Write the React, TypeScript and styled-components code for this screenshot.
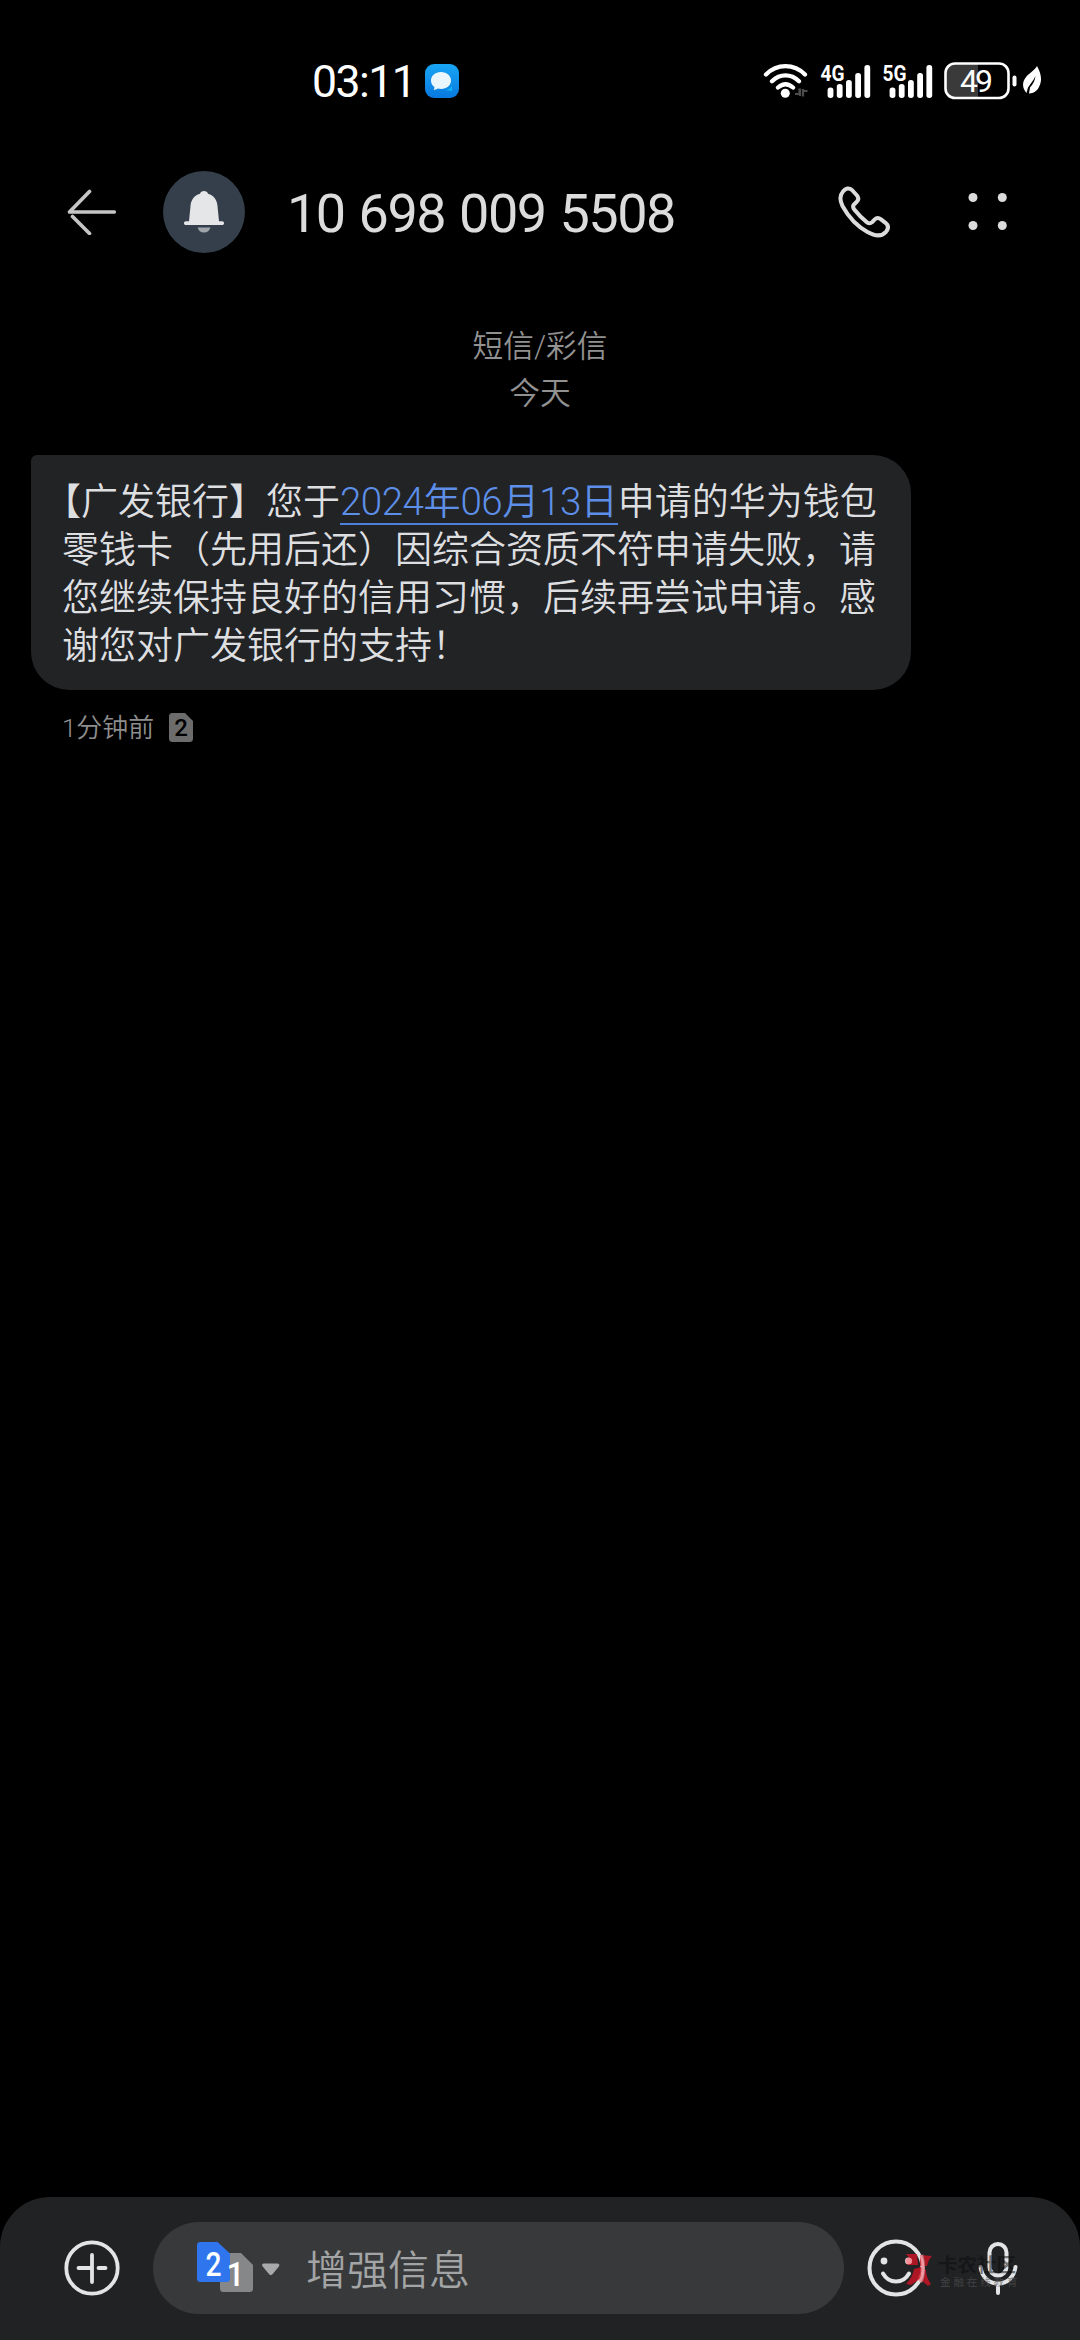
import React from "react";
import styled, { createGlobalStyle } from "styled-components";

const CJK = `"Noto Sans CJK SC", sans-serif`;

const GlobalStyle = createGlobalStyle`
  *, *::before, *::after { box-sizing: border-box; }
  body { margin: 0; background: #000; font-family: Roboto, ${CJK}; }
  svg { display: block; flex: none; }
`;

const Screen = styled.div`
  display: flex;
  flex-direction: column;
  width: 1080px;
  height: 2340px;
  overflow: hidden;
  background: #000;
  color: #dedfe0;
`;

const StatusBar = styled.header`
  display: flex;
  align-items: center;
  justify-content: space-between;
  height: 126px;
  padding: 36px 38px 0 312px;
`;

const StatusGroup = styled.div<{ $gap?: number }>`
  display: flex;
  align-items: center;
  gap: ${(p) => p.$gap ?? 0}px;
`;

const Clock = styled.time`
  padding-top: 2px;
  font-size: 44.5px;
  line-height: 54px;
  letter-spacing: -1.5px;
  color: #fff;
`;

const AppBar = styled.nav`
  display: flex;
  align-items: center;
  height: 172px;
  padding: 0 72px 0 66px;
`;

const Avatar = styled.div`
  display: grid;
  place-items: center;
  width: 82px;
  height: 82px;
  margin-left: 47px;
  border-radius: 50%;
  background: #353f4b;
`;

const Title = styled.h1`
  flex: 1;
  margin: 0 0 0 42px;
  padding-top: 3px;
  font-size: 54px;
  font-weight: 400;
  line-height: 64px;
  letter-spacing: -1.5px;
  word-spacing: 2px;
  color: #dcdcdc;
`;

const BarActions = styled.div`
  display: flex;
  align-items: center;
  gap: 78px;
`;

const Thread = styled.main`
  flex: 1;
  display: flex;
  flex-direction: column;
  padding: 25px 31px 0;
`;

const DayLabel = styled.div`
  font: 350 30.7px/47px Roboto, ${CJK};
  color: #919191;
  text-align: center;
`;

const Bubble = styled.article`
  width: 880px;
  height: 235px;
  margin-top: 38px;
  padding: 24px 0 0 31px;
  border-radius: 6px 38px 38px 38px;
  background: #222325;
`;

const Line = styled.p`
  margin: 0;
  font: 350 37px/48px Roboto, ${CJK};
  text-spacing-trim: space-all;
  white-space: nowrap;
`;

const OpeningMark = styled.span`
  margin-left: -18px;
`;

const DateLink = styled.a`
  display: inline-block;
  height: 46px;
  border-bottom: 2px solid #4d80d8;
  line-height: 48px;
  color: #5d8fe8;
  vertical-align: top;
`;

const Digits = styled.span`
  font-size: 38.5px;
  line-height: 1;
  letter-spacing: -0.5px;
`;

const Meta = styled.footer`
  display: flex;
  align-items: center;
  gap: 15px;
  height: 40px;
  margin: 18px 0 0 31px;
  font: 350 25.9px/40px Roboto, ${CJK};
  color: #8e8e8e;
`;

const Composer = styled.section`
  display: flex;
  align-items: flex-start;
  height: 143px;
  padding: 25px 0 0 64px;
  border-radius: 50px 50px 0 0;
  background: #212224;
`;

const IconSlot = styled.div<{ $left: number }>`
  display: grid;
  place-items: center;
  height: 92px;
  margin-left: ${(p) => p.$left}px;
`;

const Field = styled.div`
  display: flex;
  align-items: center;
  width: 691px;
  height: 92px;
  margin-left: 33px;
  padding-left: 44px;
  border-radius: 46px;
  background: #38393b;
`;

const Placeholder = styled.span`
  margin: -3px 0 0 25px;
  font: 350 41px/60px ${CJK};
  color: #a3a4a5;
`;

const VoiceSlot = styled(IconSlot)`
  position: relative;
`;

const Watermark = styled.div`
  position: absolute;
  left: -73px;
  top: 31px;
  display: flex;
  gap: 6px;
  opacity: 0.8;
`;

const WatermarkText = styled.div`
  display: flex;
  flex-direction: column;
  white-space: nowrap;
`;

const WatermarkName = styled.span`
  font: 700 19.5px/22px ${CJK};
  color: rgba(12, 12, 12, 0.65);
`;

const WatermarkSlogan = styled.span`
  padding-left: 2px;
  font: 500 10.5px/13px ${CJK};
  letter-spacing: 2.9px;
  color: rgba(85, 85, 87, 0.7);
`;

const MessageBadge = () => (
  <svg width="34" height="34" viewBox="0 0 34 34">
    <defs>
      <linearGradient id="badge" x1="0" y1="0" x2="0" y2="1">
        <stop offset="0" stopColor="#18a5f4" />
        <stop offset="1" stopColor="#0879df" />
      </linearGradient>
    </defs>
    <rect width="34" height="34" rx="9" fill="url(#badge)" />
    <path d="M20 26c5 0 7-3 7-7v8z" fill="#10b5f5" />
    <path d="M16 8c6 0 10 3.800 10 8.500S22 25 16 25c-1.200 0-2.300-.1-3.300-.4C11.500 25.600 10 26 8.500 26c.8-.8 1-1.900.9-2.900C7.200 21.500 6 19.200 6 16.500 6 11.800 10 8 16 8z" fill="#e9f7fd" />
  </svg>
);

const Wifi = () => (
  <svg width="46" height="36" viewBox="0 0 46 36" fill="none" stroke="#fff" strokeWidth="4.300" strokeLinecap="round">
    <path d="M3 11.500C14 .4 31 .4 42 11.500M9 18.300c8-7.800 19-7.800 27 0M15 24.500c4.800-4.200 10.200-4.200 15 0" />
    <circle cx="22.300" cy="30.300" r="4.500" fill="#fff" stroke="none" />
    <path d="M32 31h4.500v-5.500M37 25.500V33M44.500 28H40v5.500M40 33.500V26" stroke="#4c4c4c" strokeWidth="2.200" strokeLinecap="butt" />
  </svg>
);

const Signal = ({ label }: { label: string }) => (
  <svg width="51" height="46" viewBox="0 -5 51 46">
    <text x="0.500" y="17.500" textLength="24" lengthAdjust="spacingAndGlyphs" fontFamily="Roboto" fontSize="22.500" fontWeight="700" fill="#fff">
      {label}
    </text>
    {[24.5, 21, 17, 10, 2].map((y, i) => (
      <rect key={y} x={7.6 + i * 9.2} y={y} width="5.800" height={35 - y} rx="2.700" fill="#fff" />
    ))}
  </svg>
);

const Battery = () => (
  <svg width="98" height="38" viewBox="0 0 98 38">
    <path d="M34 2H12C5 2 2 5 2 12v14c0 7 3 10 10 10h22z" fill="#3a3a3a" />
    <rect x="1.500" y="1.500" width="63" height="34.500" rx="9.500" fill="none" stroke="#fff" strokeWidth="2.600" />
    <rect x="68.500" y="13.500" width="4" height="11" rx="2" fill="#fff" />
    <text x="16" y="30" textLength="33" fontFamily="Roboto" fontSize="32" fontWeight="400" fill="#fff">49</text>
    <path d="M93 4c4.500 8 5.300 15 2 21-2 4-6 6.600-10 6.400l1-6c3-3 5-7 5.500-11.500-2 4.500-5 7.500-7.500 11.500l-1.500 5.500c-4-4-4.500-10-1.500-14.500C84 11.500 90.500 9 93 4z" fill="#fff" />
  </svg>
);

const BackArrow = () => (
  <svg width="50" height="46" viewBox="0 0 50 46" fill="none" stroke="#c5c5c5" strokeWidth="3.700" strokeLinecap="round">
    <path d="M48.200 23H3.500L23.500 2.500M6.500 27.500l17 17" strokeLinejoin="round" />
  </svg>
);

const Bell = () => (
  <svg width="40" height="42" viewBox="0 0 40 42">
    <path d="M20 0c2 0 3.500 1 4 2.700 6 1.800 9 6.300 9.500 12.300L35 30.300h3c1.500 0 2 .8 2 1.900s-.7 1.900-2 1.900H2c-1.300 0-2-.8-2-1.900s.5-1.900 2-1.900h3L6.500 15C7 9 10 4.500 16 2.700 16.500 1 18 0 20 0z" fill="#e4e6e8" />
    <path d="M13.500 36.500h13c-.8 3-3.300 5-6.500 5s-5.700-2-6.500-5z" fill="#a0a5ab" />
  </svg>
);

const Phone = () => (
  <svg width="52" height="52" viewBox="0 0 52 52" fill="none" stroke="#dcdcdc" strokeWidth="4" strokeLinejoin="round">
    <path d="M5 5.500C7.500 2.200 11 1.500 14 4l5 5.500c2 2.500 1.700 4.500-.5 6.500l-2.300 2.200c-1.700 1.700-1.500 3.300.3 5.600 4 5 7.500 8.700 12.500 12.500 2 1.500 3.600 1.300 5.200-.2l2.300-2.500c2-2 4-2.200 6.500-.3l4.500 3.500c3 2.500 3.200 5.700.5 9-4.500 5-10.500 4.700-18.500.2C19.500 40.500 10.500 31 4.500 20 1.500 14 1.500 9.500 5 5.500z" />
  </svg>
);

const MoreDots = () => (
  <svg width="40" height="38" viewBox="0 0 40 38" fill="#dcdcdc">
    {[[5, 4.5], [34.3, 4.5], [5, 32.5], [34.3, 32.5]].map(([x, y]) => (
      <circle key={`${x}-${y}`} cx={x} cy={y} r="4.500" />
    ))}
  </svg>
);

const SimMark = () => (
  <svg width="24" height="30" viewBox="0 0 24 30">
    <path d="M4 0h12l8 8v17c0 3-1 4-4 4H4c-3 0-4-1-4-4V4c0-3 1-4 4-4z" fill="#6c6c6c" />
    <text x="12" y="23" textAnchor="middle" fontFamily="Roboto" fontSize="24" fontWeight="500" fill="#000">2</text>
  </svg>
);

const SimSwitch = () => (
  <svg width="84" height="54" viewBox="0 0 84 54">
    <path d="M27 12h17l12 12v23c0 3-1 4-4 4H27c-3 0-4-1-4-4V16c0-3 1-4 4-4z" fill="#868788" />
    <path d="M4 1h16.500L33 12.500V37c0 3-1 4-4 4H4c-3 0-4-1-4-4V5c0-3 1-4 4-4z" fill="#2f75ed" />
    <g fontFamily="Roboto" fontSize="34" fontWeight="500" fill="#fff" textAnchor="middle">
      <text x="16.500" y="35" textLength="16" lengthAdjust="spacingAndGlyphs">2</text>
      <text x="38.500" y="45" textLength="18" lengthAdjust="spacingAndGlyphs">1</text>
    </g>
    <path d="M67 22.500h13c2.500 0 3 1.500 1.700 3.200l-6 7.300c-1.300 1.500-2.500 1.500-3.800 0l-6-7.300c-1.400-1.700-1-3.200 1.100-3.200z" fill="#a8a9aa" />
  </svg>
);

const AddIcon = () => (
  <svg width="56" height="56" viewBox="0 0 56 56" fill="none" stroke="#e3e4e5" strokeWidth="3.800">
    <circle cx="28" cy="28" r="25.700" />
    <path d="M28 15v27M14.500 28H28M34.500 28h7" strokeLinecap="round" />
  </svg>
);

const SmileIcon = () => (
  <svg width="58" height="58" viewBox="0 0 58 58" fill="none" stroke="#e3e4e5" strokeWidth="4">
    <circle cx="29" cy="29" r="26.500" />
    <path d="M16 34.500c6 10.700 20 10.700 26 0" strokeLinecap="round" />
    <circle cx="17" cy="22" r="3.400" fill="#e3e4e5" stroke="none" />
    <circle cx="41.500" cy="22" r="3.400" fill="#e3e4e5" stroke="none" />
  </svg>
);

const MicIcon = () => (
  <svg width="40" height="54" viewBox="0 0 40 54" fill="none" stroke="#e3e4e5" strokeWidth="4" strokeLinecap="round">
    <rect x="11.500" y="3" width="17" height="31.500" rx="8.500" />
    <path d="M2.500 26C4 36 10.500 42.500 20 42.500S36 36 37.500 26M20 43v9" />
  </svg>
);

const WatermarkLogo = () => (
  <svg width="27" height="34" viewBox="0 0 27 34">
    <path d="M1 1h11l1 11H2c2-2 3-4 3-6zM15 2l12 1c-3 3-4 6-5 10h-7zM9 16l7-2 5 3c0 5 2 10 5 14l-3 2-8-7-9 6-5-1c4-4 7-9 8-15z" fill="#d01425" />
    <circle cx="4" cy="8" r="3.200" fill="#ff7b86" />
    <path d="M16.500 2c2.500 8 2.500 20-1 27" fill="none" stroke="#f08a92" strokeWidth="3.500" />
  </svg>
);

export default function App() {
  return (
    <Screen>
      <GlobalStyle />
      <StatusBar>
        <StatusGroup $gap={10}>
          <Clock>03:11</Clock>
          <MessageBadge />
        </StatusGroup>
        <StatusGroup $gap={11}>
          <Wifi />
          <Signal label="4G" />
          <Signal label="5G" />
          <Battery />
        </StatusGroup>
      </StatusBar>
      <AppBar>
        <BackArrow />
        <Avatar>
          <Bell />
        </Avatar>
        <Title>10 698 009 5508</Title>
        <BarActions>
          <Phone />
          <MoreDots />
        </BarActions>
      </AppBar>
      <Thread>
        <DayLabel>短信/彩信</DayLabel>
        <DayLabel>今天</DayLabel>
        <Bubble>
          <Line>
            <OpeningMark>【</OpeningMark>广发银行】您于
            <DateLink>
              <Digits>2024</Digits>年<Digits>06</Digits>月<Digits>13</Digits>日
            </DateLink>
            申请的华为钱包
          </Line>
          <Line>零钱卡（先用后还）因综合资质不符申请失败，请</Line>
          <Line>您继续保持良好的信用习惯，后续再尝试申请。感</Line>
          <Line>谢您对广发银行的支持！</Line>
        </Bubble>
        <Meta>
          1分钟前
          <SimMark />
        </Meta>
      </Thread>
      <Composer>
        <IconSlot $left={0}>
          <AddIcon />
        </IconSlot>
        <Field>
          <SimSwitch />
          <Placeholder>增强信息</Placeholder>
        </Field>
        <IconSlot $left={23}>
          <SmileIcon />
        </IconSlot>
        <VoiceSlot $left={53}>
          <MicIcon />
          <Watermark>
            <WatermarkLogo />
            <WatermarkText>
              <WatermarkName>卡农社区</WatermarkName>
              <WatermarkSlogan>金融在线教育</WatermarkSlogan>
            </WatermarkText>
          </Watermark>
        </VoiceSlot>
      </Composer>
    </Screen>
  );
}
